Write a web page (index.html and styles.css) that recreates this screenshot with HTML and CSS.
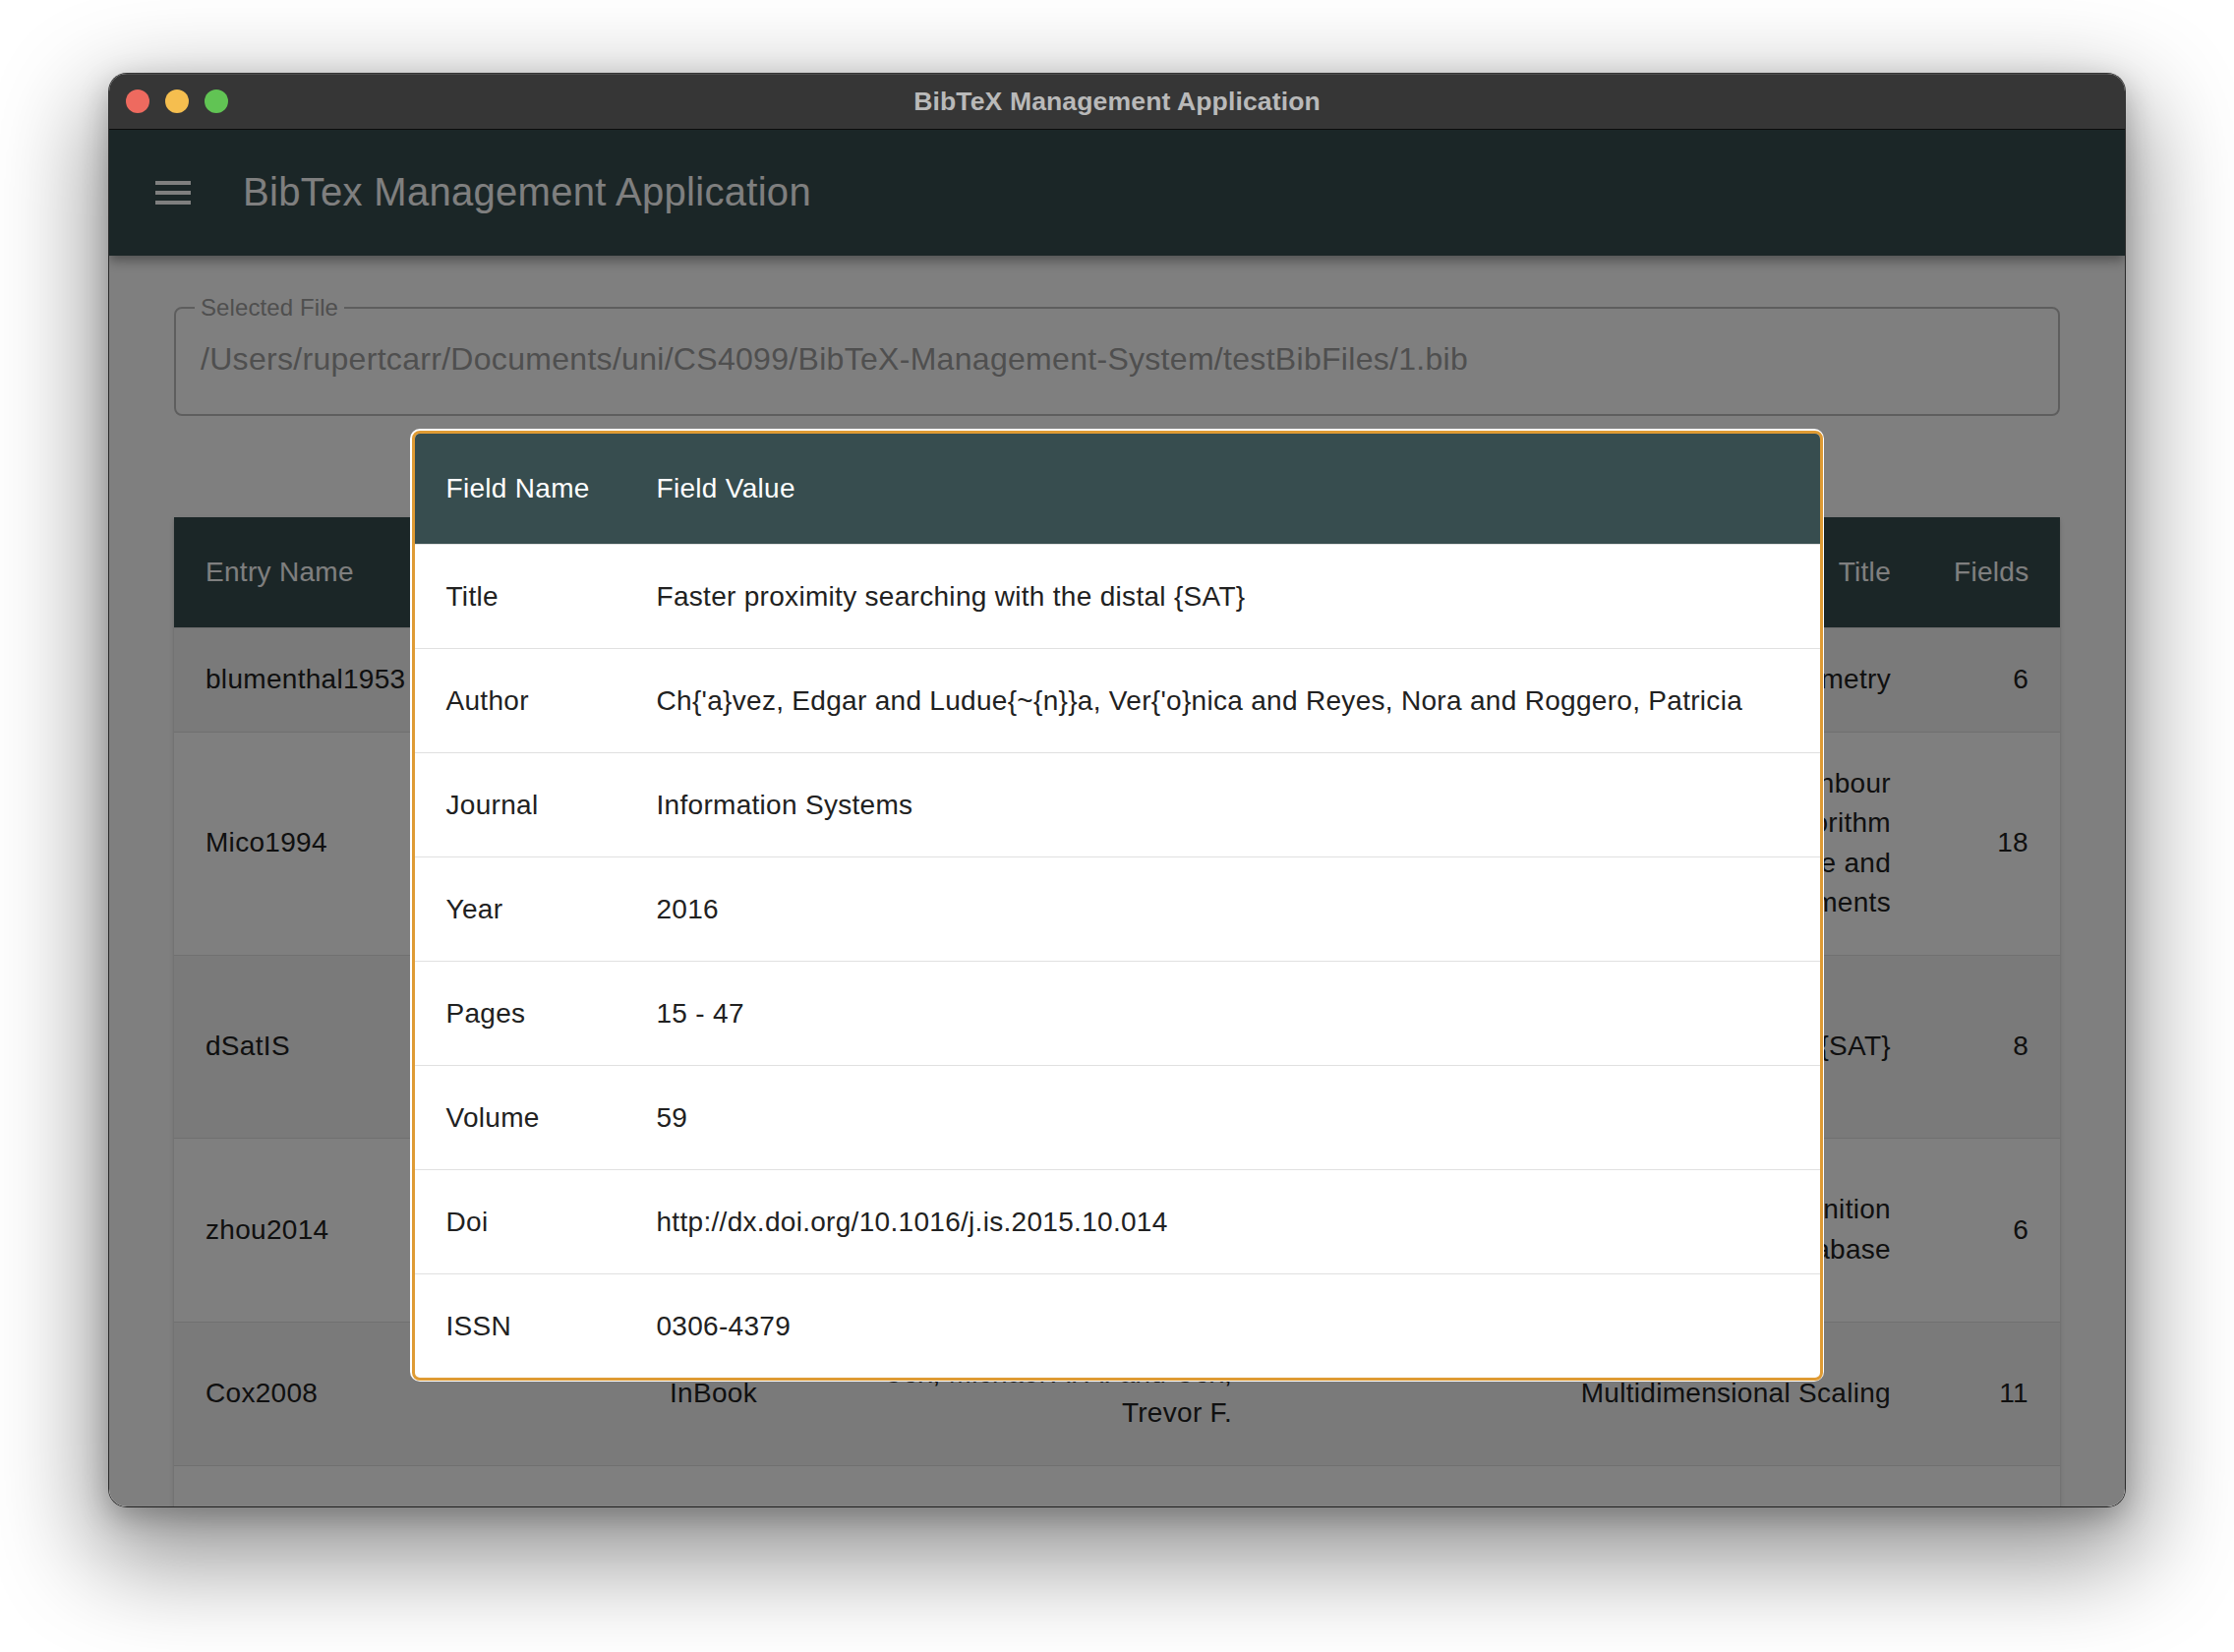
FILE: index.html
```html
<!DOCTYPE html>
<html lang="en">
<head>
<meta charset="utf-8">
<title>BibTeX Management Application</title>
<link rel="stylesheet" href="styles.css">
</head>
<body>
<div class="window">
  <div class="titlebar">
    <div class="lights">
      <span class="light red"></span>
      <span class="light yellow"></span>
      <span class="light green"></span>
    </div>
    <div class="wtitle">BibTeX Management Application</div>
    <div></div>
  </div>
  <div class="content">
    <header class="appbar">
      <svg class="menu" viewBox="0 0 24 24" width="48" height="48" aria-hidden="true"><path d="M3 18h18v-2H3v2zm0-5h18v-2H3v2zm0-7v2h18V6H3z"/></svg>
      <h1 class="apptitle">BibTex Management Application</h1>
    </header>
    <main class="main">
      <fieldset class="file">
        <legend>Selected File</legend>
        <div class="path">/Users/rupertcarr/Documents/uni/CS4099/BibTeX-Management-System/testBibFiles/1.bib</div>
      </fieldset>
      <div class="paper">
        <table class="entries">
          <colgroup>
            <col class="c-entry"><col class="c-type"><col class="c-author"><col class="c-title"><col class="c-fields">
          </colgroup>
          <thead>
            <tr><th class="left">Entry Name</th><th>Type</th><th>Author</th><th>Title</th><th>Fields</th></tr>
          </thead>
          <tbody>
            <tr>
              <td class="left">blumenthal1953</td><td>Book</td><td>Blumenthal, Leonard M.</td>
              <td>Theory and Applications of Distance Geometry</td><td>6</td>
            </tr>
            <tr>
              <td class="left">Mico1994</td><td>Article</td><td>Mic{\'o}, Luisa and Oncina,<br>Jose and Vidal, Enrique</td>
              <td>A new version of the nearest-neighbour<br>approximating and eliminating search algorithm<br>(AESA) with linear preprocessing time and<br>memory requirements</td><td>18</td>
            </tr>
            <tr>
              <td class="left">dSatIS</td><td>Article</td><td>Ch{'a}vez, Edgar and Ludue{~{n}}a,<br>Ver{'o}nica and Reyes, Nora and<br>Roggero, Patricia</td>
              <td>Faster proximity searching with the distal {SAT}</td><td>8</td>
            </tr>
            <tr>
              <td class="left">zhou2014</td><td>Article</td><td>Zhou, Xiang-Dong and Wang,<br>Da-Han and Tian, Feng and<br>Liu, Cheng-Lin</td>
              <td>Online handwriting recognition<br>using a large database</td><td>6</td>
            </tr>
            <tr>
              <td class="left">Cox2008</td><td>InBook</td><td>Cox, Michael A. A. and Cox,<br>Trevor F.</td>
              <td>Multidimensional Scaling</td><td>11</td>
            </tr>
            <tr>
              <td class="left">Fisher1938</td><td>Book</td><td>Fisher, Ronald A. and Yates, Frank</td>
              <td>Statistical Tables</td><td>7</td>
            </tr>
          </tbody>
        </table>
      </div>
    </main>
    <div class="backdrop">
      <div class="dialog">
        <div class="dialog-inner">
          <table class="fields">
            <colgroup><col class="c-name"><col></colgroup>
            <thead>
              <tr><th>Field Name</th><th>Field Value</th></tr>
            </thead>
            <tbody>
              <tr><td>Title</td><td>Faster proximity searching with the distal {SAT}</td></tr>
              <tr><td>Author</td><td>Ch{'a}vez, Edgar and Ludue{~{n}}a, Ver{'o}nica and Reyes, Nora and Roggero, Patricia</td></tr>
              <tr><td>Journal</td><td>Information Systems</td></tr>
              <tr><td>Year</td><td>2016</td></tr>
              <tr><td>Pages</td><td>15 - 47</td></tr>
              <tr><td>Volume</td><td>59</td></tr>
              <tr><td>Doi</td><td>http://dx.doi.org/10.1016/j.is.2015.10.014</td></tr>
              <tr><td>ISSN</td><td>0306-4379</td></tr>
            </tbody>
          </table>
        </div>
      </div>
    </div>
  </div>
</div>
</body>
</html>
```

FILE: styles.css
```css
html, body {
  margin: 0;
  padding: 0;
}
body {
  width: 2272px;
  height: 1680px;
  overflow: hidden;
  background: #ffffff;
  font-family: "Liberation Sans", Arial, Helvetica, sans-serif;
  padding-top: 75px;
  box-sizing: border-box;
}
.window {
  width: 2050px;
  height: 1457px;
  margin: 0 auto;
  border-radius: 18px;
  overflow: hidden;
  display: flex;
  flex-direction: column;
  box-shadow: 0 0 0 1px rgba(0, 0, 0, 0.75), 0 40px 100px 16px rgba(0, 0, 0, 0.42), 0 10px 30px rgba(0, 0, 0, 0.25);
  background: #fff;
}
.titlebar {
  height: 56px;
  flex: none;
  background: #363636;
  border-bottom: 1px solid #0c0c0c;
  box-shadow: inset 0 1px 0 rgba(255, 255, 255, 0.12);
  display: grid;
  grid-template-columns: 1fr auto 1fr;
  align-items: center;
}
.lights {
  display: flex;
  gap: 16px;
  padding-left: 17px;
}
.light {
  width: 24px;
  height: 24px;
  border-radius: 50%;
  display: block;
}
.red { background: #ee6a5f; }
.yellow { background: #f5be4f; }
.green { background: #61c454; }
.wtitle {
  color: #b9b9b9;
  font-weight: 700;
  font-size: 26.6px;
  letter-spacing: 0.1px;
}
.content {
  position: relative;
  flex: 1;
  overflow: hidden;
  background: #ffffff;
}
.appbar {
  height: 128px;
  background: #374d4f;
  display: flex;
  align-items: center;
  padding-left: 41px;
  box-shadow: 0 4px 8px -2px rgba(0, 0, 0, 0.2), 0 8px 10px 0 rgba(0, 0, 0, 0.14), 0 2px 20px 0 rgba(0, 0, 0, 0.12);
  position: relative;
  z-index: 1;
}
.menu {
  fill: #ffffff;
  flex: none;
}
.apptitle {
  margin: -2px 0 0 47px;
  font-weight: 400;
  font-size: 40px;
  letter-spacing: 0.3px;
  color: #ffffff;
  line-height: 64px;
}
.main {
  padding: 43px 66px 0;
}
.file {
  margin: 0;
  border: 2px solid #bdbdbd;
  border-radius: 8px;
  padding: 0 0 0 19px;
}
.file legend {
  padding: 0 6px;
  font-size: 24px;
  line-height: 20px;
  letter-spacing: 0.1px;
  color: #9e9e9e;
}
.path {
  font-size: 32px;
  letter-spacing: 0.3px;
  line-height: 40px;
  padding: 22px 0 36px 6px;
  color: #9e9e9e;
  white-space: nowrap;
}
.paper {
  margin-top: 103px;
  box-shadow: 0 4px 2px -2px rgba(0, 0, 0, 0.2), 0 2px 2px 0 rgba(0, 0, 0, 0.14), 0 2px 6px 0 rgba(0, 0, 0, 0.12);
}
.entries {
  width: 100%;
  border-collapse: collapse;
  table-layout: fixed;
}
.c-entry { width: 383px; }
.c-type { width: 242px; }
.c-author { width: 483px; }
.c-title { width: 670px; }
.c-fields { width: 140px; }
.entries th {
  background: #374d4f;
  color: #ffffff;
  font-weight: 500;
  font-size: 28px;
  letter-spacing: 0.3px;
  line-height: 48px;
  padding: 32px;
  text-align: right;
  border-bottom: 1px solid #e0e0e0;
}
.entries td {
  font-size: 28px;
  letter-spacing: 0.3px;
  line-height: 40.5px;
  padding: 32px;
  color: #212121;
  text-align: right;
  vertical-align: middle;
  border-bottom: 1px solid #e0e0e0;
  white-space: nowrap;
}
.entries .left {
  text-align: left;
}
.entries tbody tr:nth-child(odd) {
  background: #f5f5f5;
}
.backdrop {
  position: absolute;
  inset: 0;
  z-index: 5;
  background: rgba(0, 0, 0, 0.5);
  display: flex;
  justify-content: center;
  align-items: flex-start;
  padding-top: 304px;
}
.dialog {
  width: 1438px;
  box-sizing: border-box;
  background: #ffffff;
  padding: 1.5px;
  border-radius: 10px;
}
.dialog-inner {
  border: 3px solid #df9b34;
  border-radius: 8px;
  overflow: hidden;
}
.fields {
  width: 100%;
  border-collapse: collapse;
  table-layout: fixed;
}
.c-name { width: 214px; }
.fields th {
  background: #374d4f;
  color: #ffffff;
  font-weight: 500;
  font-size: 28px;
  letter-spacing: 0.3px;
  line-height: 48px;
  padding: 32px;
  text-align: left;
  border-bottom: 1px solid #e0e0e0;
}
.fields td {
  font-size: 28px;
  letter-spacing: 0.3px;
  line-height: 41px;
  padding: 32px;
  color: #212121;
  border-bottom: 1px solid #e0e0e0;
  white-space: nowrap;
}
.fields tbody tr:last-child td {
  border-bottom: none;
}
```
